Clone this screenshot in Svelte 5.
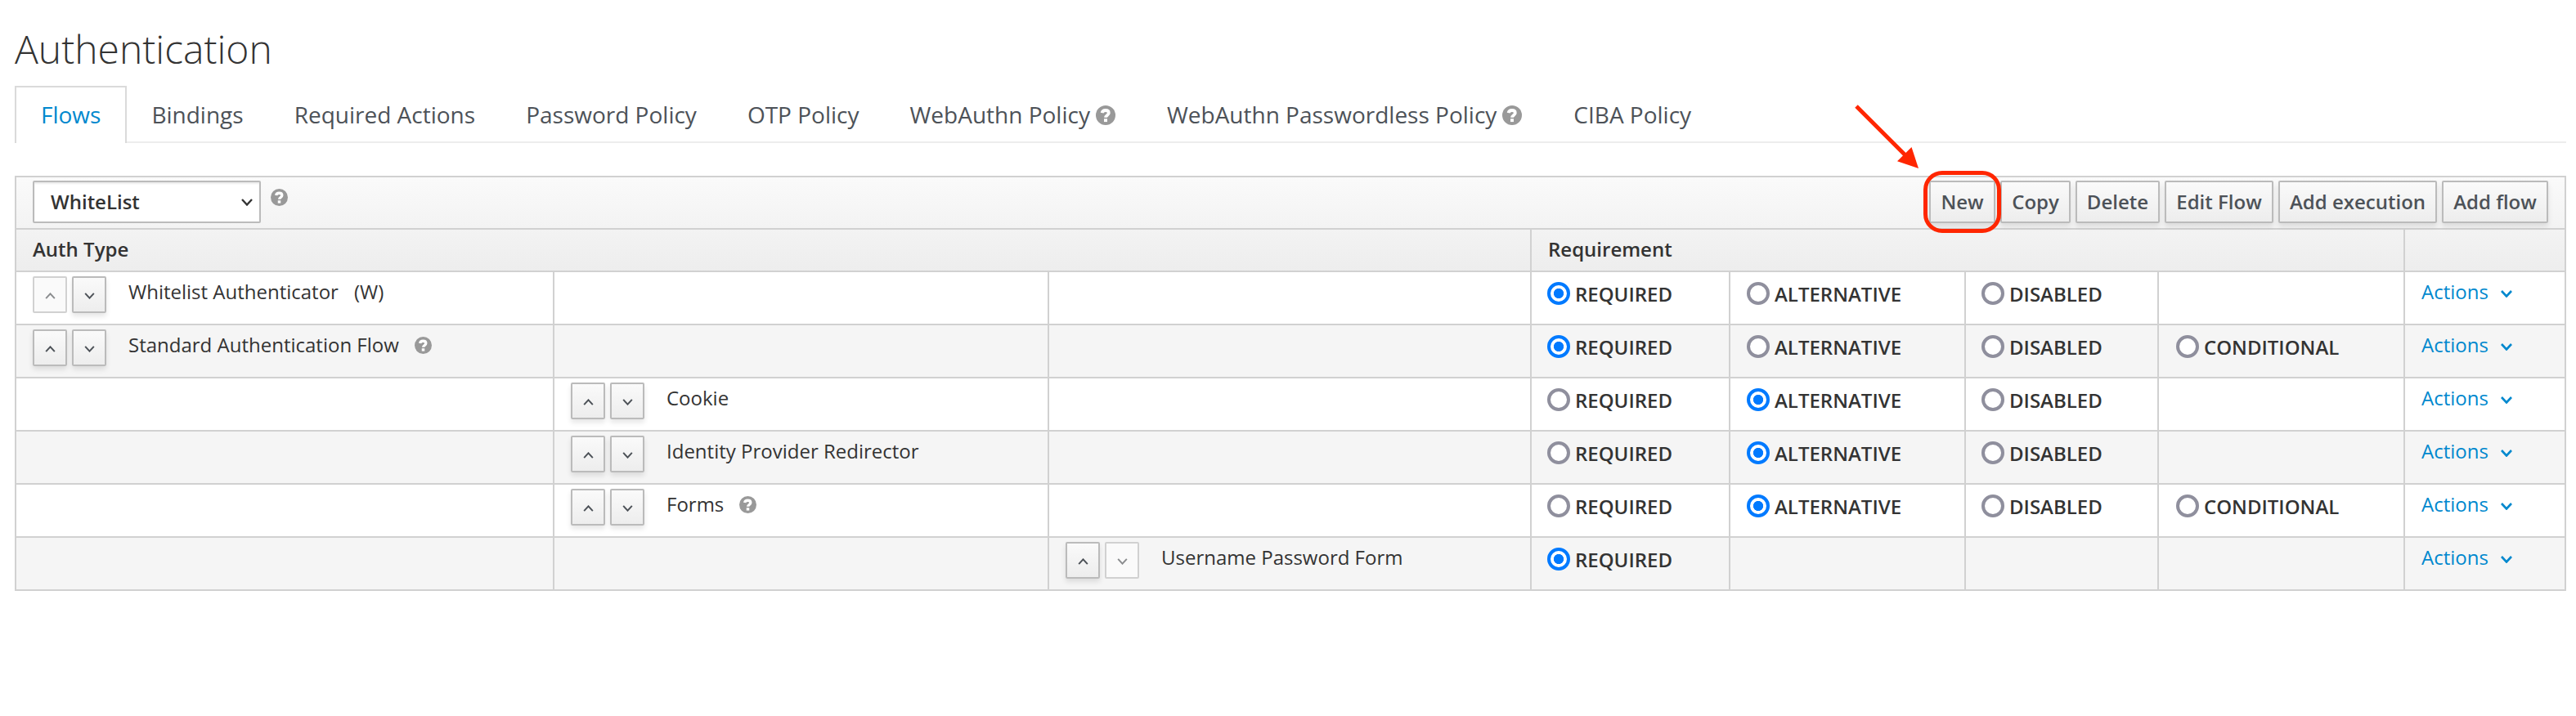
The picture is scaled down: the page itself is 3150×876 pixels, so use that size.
<script>
  const tabs = [
    { label: 'Flows', active: true },
    { label: 'Bindings' },
    { label: 'Required Actions' },
    { label: 'Password Policy' },
    { label: 'OTP Policy' },
    { label: 'WebAuthn Policy', help: true },
    { label: 'WebAuthn Passwordless Policy', help: true },
    { label: 'CIBA Policy' }
  ];
  const buttons = [
    { label: 'New', width: 81 },
    { label: 'Copy', width: 86 },
    { label: 'Delete', width: 103 },
    { label: 'Edit Flow', width: 133 },
    { label: 'Add execution', width: 194 },
    { label: 'Add flow', width: 130 }
  ];
  const widths = [658, 605, 590, 243, 288, 236, 301, 199];
  const three = ['REQUIRED', 'ALTERNATIVE', 'DISABLED', ''];
  const four = ['REQUIRED', 'ALTERNATIVE', 'DISABLED', 'CONDITIONAL'];
  const rows = [
    { name: 'Whitelist Authenticator', alias: '(W)', level: 0, first: true, options: three, value: 'REQUIRED' },
    { name: 'Standard Authentication Flow', help: true, level: 0, options: four, value: 'REQUIRED' },
    { name: 'Cookie', level: 1, options: three, value: 'ALTERNATIVE' },
    { name: 'Identity Provider Redirector', level: 1, options: three, value: 'ALTERNATIVE' },
    { name: 'Forms', help: true, level: 1, options: four, value: 'ALTERNATIVE' },
    { name: 'Username Password Form', level: 2, last: true, options: ['REQUIRED', '', '', ''], value: 'REQUIRED' }
  ];
</script>

{#snippet help()}
  <svg class="help" viewBox="0 0 24 24" aria-hidden="true">
    <circle cx="12" cy="12" r="12" />
    <path d="M7.600 9.200C8 6.900 9.900 6 11.800 6c2.400 0 4 1.200 4 3.200 0 2.700-3.700 2.800-3.700 5.500" />
    <rect x="10" y="16.300" width="4" height="3.800" />
  </svg>
{/snippet}

{#snippet chevron(cls, up)}
  <svg class={cls} viewBox="0 0 14 9" aria-hidden="true">
    <path d={up ? 'M1 8l6-6.500 6 6.500' : 'M1 1l6 6.500 6-6.500'} />
  </svg>
{/snippet}

<main>
  <h1>Authentication</h1>
  <ul class="tabs">
    {#each tabs as tab}
      <li class:active={tab.active}>
        {tab.label}{#if tab.help}{@render help()}{/if}
      </li>
    {/each}
  </ul>

  <table>
    <colgroup>
      {#each widths as w}<col style="width: {w}px" />{/each}
    </colgroup>
    <thead>
      <tr class="toolbar-row">
        <th colspan="8">
          <div class="toolbar">
            <div class="select">WhiteList{@render chevron('caret', false)}</div>
            {@render help()}
            <div class="buttons">
              {#each buttons as b, i}
                <button class:marked={i === 0} style="width: {b.width}px">
                  {b.label}
                  {#if i === 0}
                    <span class="ring"></span>
                    <svg class="arrow" viewBox="0 0 80 80" aria-hidden="true">
                      <path class="shaft" d="M2 2L62 62" />
                      <path class="head" d="M69.500 52L78 78L52 69.200Z" />
                    </svg>
                  {/if}
                </button>
              {/each}
            </div>
          </div>
        </th>
      </tr>
      <tr class="head-row">
        <th colspan="3">Auth Type</th>
        <th colspan="4">Requirement</th>
        <th></th>
      </tr>
    </thead>
    <tbody>
      {#each rows as row, r}
        <tr>
          {#each [0, 1, 2] as level}
            <td>
              {#if row.level === level}
                <div class="exec">
                  <button class="move" disabled={row.first}>{@render chevron('arrow-icon', true)}</button>
                  <button class="move" disabled={row.last}>{@render chevron('arrow-icon', false)}</button>
                  <span class="name">{row.name}</span>
                  {#if row.alias}<span class="alias">{row.alias}</span>{/if}
                  {#if row.help}{@render help()}{/if}
                </div>
              {/if}
            </td>
          {/each}
          {#each row.options as option}
            <td>
              {#if option}
                <label class={option.toLowerCase()}>
                  <input type="radio" name="requirement-{r}" checked={option === row.value} />{option}
                </label>
              {/if}
            </td>
          {/each}
          <td>
            <div class="actions">Actions{@render chevron('action-icon', false)}</div>
          </td>
        </tr>
      {/each}
    </tbody>
  </table>
</main>

<style>
  :global(body) {
    background: #fff;
  }
  main {
    width: 3120px;
    padding: 27px 0 0 18px;
    font-family: 'Open Sans', sans-serif;
    font-size: 24px;
    line-height: 36px;
    color: #333;
  }
  h1 {
    margin: 0;
    height: 78px;
    font-size: 48px;
    font-weight: 300;
    line-height: 66px;
  }
  svg {
    display: block;
    flex: none;
  }
  .help {
    width: 21px;
    height: 21px;
    fill: #999;
  }
  .help path {
    fill: none;
    stroke: #fff;
    stroke-width: 3.8;
  }
  .help rect {
    fill: #fff;
  }
  .tabs {
    display: flex;
    margin: 0 0 40px;
    padding: 0;
    list-style: none;
    height: 68px;
    border-bottom: 2px solid #ededed;
  }
  .tabs li {
    display: flex;
    height: 68px;
    box-sizing: border-box;
    padding: 0 30px;
    border: 2px solid transparent;
    border-bottom: 0;
    margin-right: -2px;
    font-size: 28px;
    line-height: 66px;
    color: #4d5258;
    white-space: nowrap;
  }
  .tabs li.active {
    height: 70px;
    background: #fff;
    border-color: #dadada;
    color: #0088ce;
  }
  .tabs .help {
    width: 24px;
    height: 24px;
    margin: 22px 1px 0 7px;
  }
  table {
    width: 3120px;
    table-layout: fixed;
    border-collapse: separate;
    border-spacing: 0;
    border: solid #d1d1d1;
    border-width: 2px 0 0;
  }
  thead {
    background: linear-gradient(#fafafa, #ededed);
  }
  th,
  td {
    box-sizing: border-box;
    padding: 0;
    border: solid #d1d1d1;
    border-width: 0 0 2px 2px;
    text-align: left;
    vertical-align: top;
    font-weight: 400;
  }
  tr > :last-child {
    border-right-width: 2px;
  }
  th {
    font-weight: 600;
  }
  .toolbar-row th {
    height: 64px;
  }
  .head-row th {
    height: 52px;
    padding: 6px 0 0 20px;
  }
  td {
    height: 65px;
  }
  tbody tr:nth-child(even) {
    background: #f5f5f5;
  }
  .toolbar {
    display: flex;
    padding: 4px 20px 0;
  }
  .toolbar > .help {
    margin: 10px 0 0 12px;
  }
  .select {
    display: flex;
    align-items: center;
    justify-content: space-between;
    box-sizing: border-box;
    width: 279px;
    height: 52px;
    padding: 0 8px 0 20px;
    border: 2px solid #bbb;
    border-radius: 2px;
    background: #fff;
    box-shadow: inset 0 2px 2px rgba(3, 3, 3, 0.075);
  }
  .caret {
    width: 14px;
    height: 9px;
    fill: none;
    stroke: #333;
    stroke-width: 2.4;
  }
  .buttons {
    display: flex;
    gap: 6px;
    margin-left: auto;
  }
  button {
    box-sizing: border-box;
    margin: 0;
    border: 2px solid #bbb;
    border-radius: 2px;
    background: linear-gradient(#fafafa, #ededed);
    box-shadow: 0 4px 6px rgba(3, 3, 3, 0.1);
    font: inherit;
    color: #4d5258;
    white-space: nowrap;
  }
  .buttons button {
    height: 52px;
    padding: 0;
  }
  .marked {
    position: relative;
  }
  .ring {
    position: absolute;
    z-index: 1;
    left: -9px;
    top: -14px;
    width: 85px;
    height: 66px;
    border: 5px solid #ff2600;
    border-radius: 23px;
  }
  .arrow {
    position: absolute;
    left: -93px;
    top: -95px;
    width: 80px;
    height: 80px;
  }
  .shaft {
    stroke: #ff2600;
    stroke-width: 5;
  }
  .head {
    fill: #ff2600;
  }
  .exec {
    display: flex;
    padding: 5px 0 0 20px;
    white-space: nowrap;
  }
  .move {
    display: flex;
    align-items: center;
    justify-content: center;
    width: 42px;
    height: 45px;
    margin-right: 6px;
    padding: 3px 0 0;
  }
  .move:disabled {
    background: #fafafa;
    border-color: #d1d1d1;
    box-shadow: none;
    color: #8b8d8f;
  }
  .arrow-icon {
    width: 13px;
    height: 8px;
    fill: none;
    stroke: currentColor;
    stroke-width: 2.200;
  }
  .name {
    margin: 1px 0 0 21px;
  }
  .alias {
    margin: 1px 0 0 19px;
  }
  .exec .help {
    margin: 9px 0 0 19px;
  }
  label {
    display: flex;
    padding: 9px 0 0 19px;
    font-weight: 600;
  }
  .alternative {
    padding-left: 20px;
  }
  .conditional {
    padding-left: 21px;
  }
  input {
    appearance: none;
    box-sizing: border-box;
    width: 28px;
    height: 28px;
    margin: 3px 6px 0 0;
    border: 4px solid #8f8f9d;
    border-radius: 50%;
    background: #fff;
  }
  input:checked {
    border-color: #007aff;
    background: radial-gradient(circle, #007aff 5.700px, #fff 6.500px);
  }
  .actions {
    display: flex;
    padding: 6px 0 0 20px;
    color: #0088ce;
  }
  .action-icon {
    width: 14px;
    height: 9px;
    margin: 16px 0 0 15px;
    fill: none;
    stroke: currentColor;
    stroke-width: 2.600;
  }
</style>
